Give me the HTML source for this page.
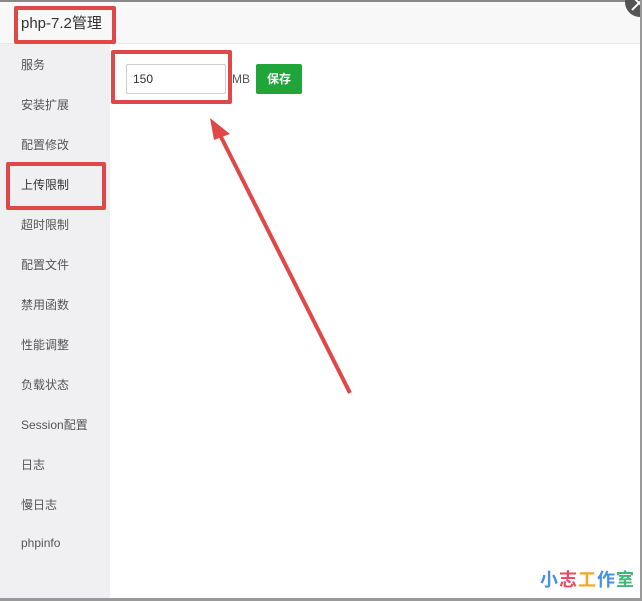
<!DOCTYPE html>
<html><head><meta charset="utf-8"><style>
body{margin:0;width:642px;height:601px;background:#fff;font-family:"Liberation Sans","Noto Sans CJK SC",sans-serif;position:relative;overflow:hidden}
.top{position:absolute;left:0;top:0;width:642px;height:2px;background:#888}
.hdr{position:absolute;left:0;top:2px;width:640px;height:41px;background:#f8f8f8;border-bottom:1px solid #e8e8e8}
.rb{position:absolute;left:640px;top:0;width:2px;height:601px;background:#999}
.bb{position:absolute;left:0;top:598px;width:642px;height:3px;background:#999}
.side{position:absolute;left:0;top:44px;width:110px;height:554px;background:#f0f0f2}
.mi{position:absolute;left:21px;font-size:12px;color:#555}
.box{position:absolute;border:4px solid #e04848;border-radius:2px}
</style></head><body>
<div class="top"></div><div class="hdr"></div>
<div style="position:absolute;left:21px;top:12px;font-size:15px;color:#333">php-7.2管理</div>
<div class="box" style="left:14px;top:6px;width:94px;height:30px"></div>
<div class="side"></div>
<div class="mi" style="top:56px">服务</div>
<div class="mi" style="top:96px">安装扩展</div>
<div class="mi" style="top:136px">配置修改</div>
<div class="mi" style="top:176px;color:#333">上传限制</div>
<div class="mi" style="top:216px">超时限制</div>
<div class="mi" style="top:256px">配置文件</div>
<div class="mi" style="top:296px">禁用函数</div>
<div class="mi" style="top:336px">性能调整</div>
<div class="mi" style="top:376px">负载状态</div>
<div class="mi" style="top:416px">Session配置</div>
<div class="mi" style="top:456px">日志</div>
<div class="mi" style="top:496px">慢日志</div>
<div class="mi" style="top:536px">phpinfo</div>
<div class="box" style="left:6px;top:162px;width:92px;height:40px"></div>
<div style="position:absolute;left:126px;top:64px;height:28px;border:1px solid #ccc;border-radius:2px;font-size:12px;line-height:28px;padding-left:6px;width:92px;color:#333">150</div>
<div style="position:absolute;left:232px;top:72px;font-size:12px;color:#555">MB</div>
<div style="position:absolute;left:256px;top:64px;width:46px;height:30px;background:#20a53a;border-radius:2px;color:#fff;font-size:12px;font-weight:bold;line-height:30px;text-align:center">保存</div>
<div class="box" style="left:111px;top:50px;width:113px;height:46px"></div>
<svg style="position:absolute;left:0;top:0" width="642" height="601"><line x1="350" y1="393" x2="220" y2="135" stroke="#e04848" stroke-width="4"/><polygon points="210,118 230,134 214,140" fill="#e04848"/>
<circle cx="640" cy="2" r="15" fill="#555"/><path d="M632 -4 L646 10 M646 -4 L632 10" stroke="#fff" stroke-width="2"/></svg>
<div style="position:absolute;left:540px;top:566px;font-size:18px;letter-spacing:1px;font-weight:bold"><span style="color:#4a90e2">小</span><span style="color:#e84a5f">志</span><span style="color:#f5a623">工</span><span style="color:#4a90e2">作</span><span style="color:#3cb878">室</span></div>
<div class="rb"></div><div class="bb"></div>
</body></html>
